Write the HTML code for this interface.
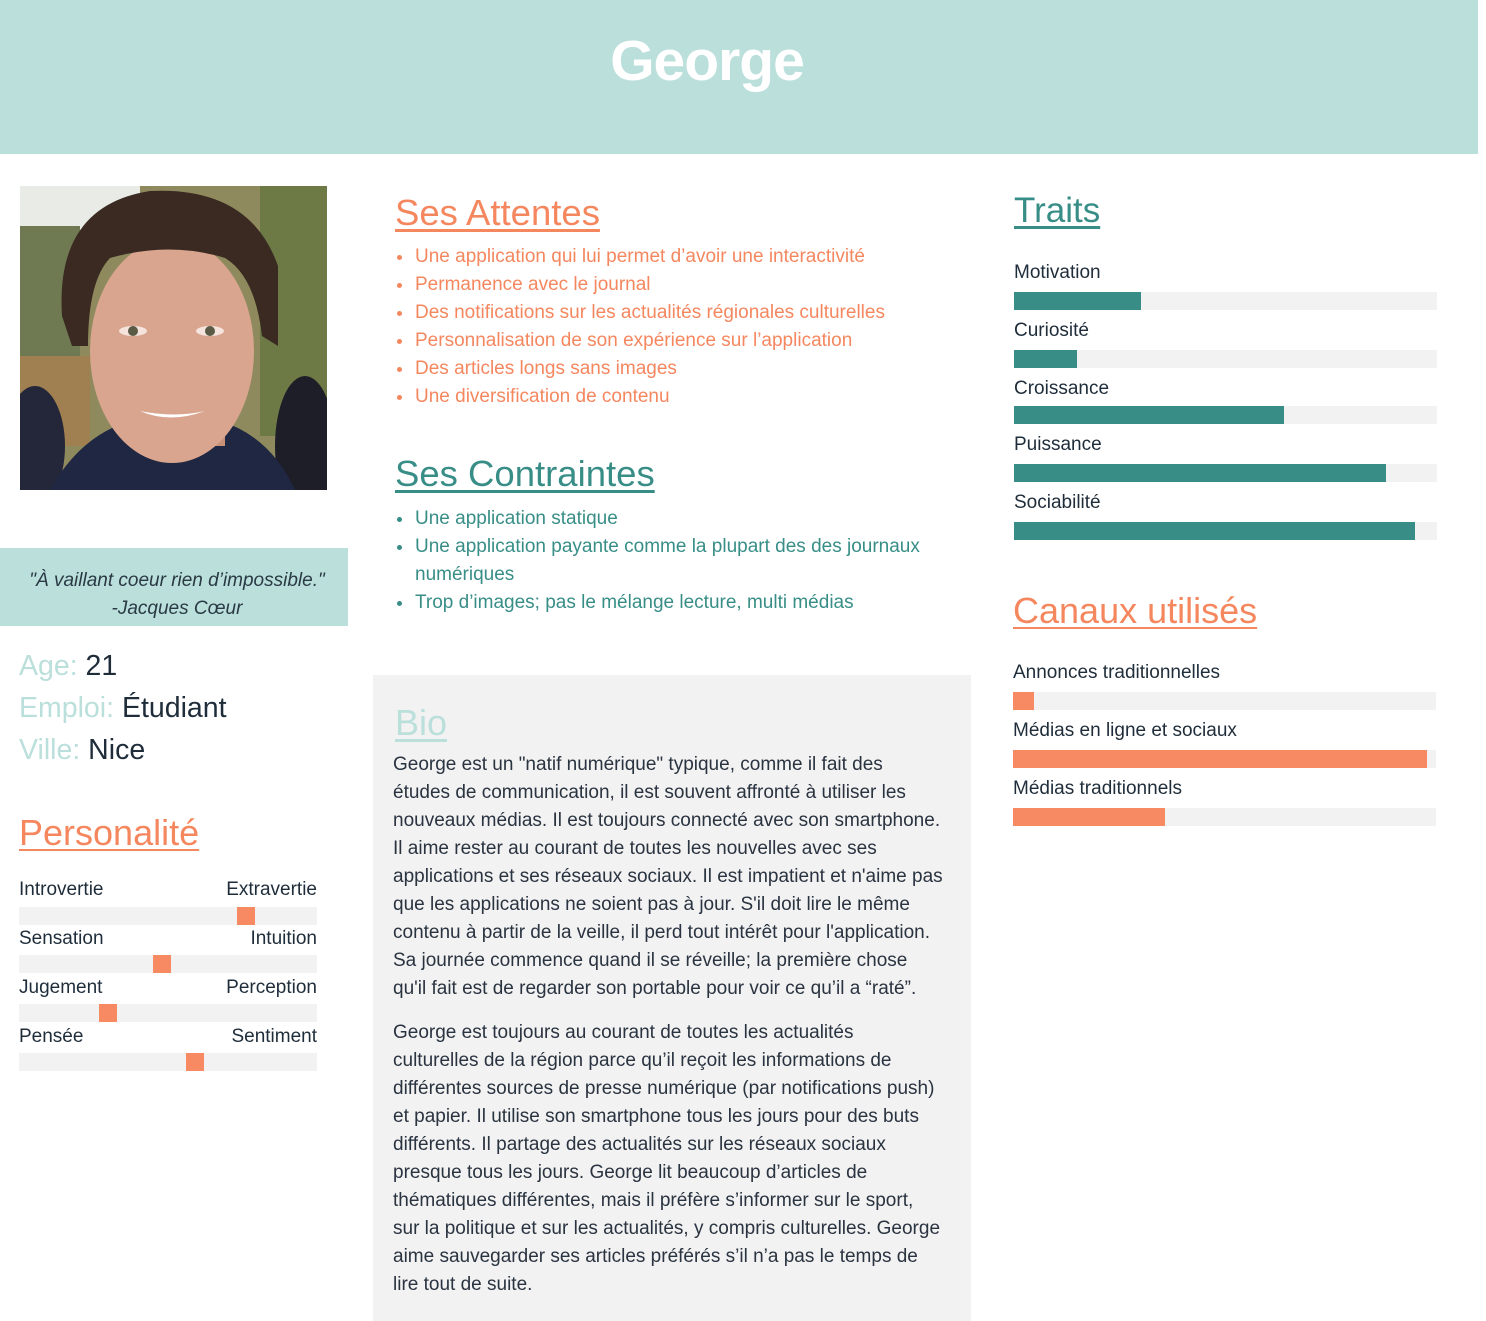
<!DOCTYPE html>
<html><head><meta charset="utf-8"><style>
*{margin:0;padding:0;box-sizing:border-box}
body{width:1486px;height:1321px;background:#fff;position:relative;overflow:hidden;font-family:"Liberation Sans",sans-serif;color:#1f2d3a}
.a{position:absolute;white-space:nowrap}
.hdr{position:absolute;left:0;top:0;width:1478px;height:154px;background:#bbdfdb}
.hdr h1{position:absolute;left:0;width:1414px;text-align:center;top:28px;font-size:57px;font-weight:bold;color:#fff;letter-spacing:-1px}
h2{position:absolute;font-weight:normal;text-decoration:underline;text-decoration-thickness:3px;text-underline-offset:4px;white-space:nowrap}
.or{color:#f5875f}.tl{color:#388e87}
ul{position:absolute;list-style:none;font-size:19px;line-height:28px}
ul li{position:relative;padding-left:20px;white-space:nowrap}
ul li:before{content:"";position:absolute;left:2px;top:12px;width:5px;height:5px;border-radius:50%;background:currentColor}
.bar{position:absolute;height:18px;background:#f2f2f2}
.bar i{position:absolute;left:0;top:0;height:18px}
.lbl{position:absolute;font-size:19px;white-space:nowrap;color:#1f2d3a}
.mk{position:absolute;width:18px;height:18px;background:#f78a62}
.bio{position:absolute;left:373px;top:675px;width:598px;height:646px;background:#f2f2f2}
.bio p{position:absolute;left:20px;font-size:19px;line-height:28px;white-space:nowrap;color:#2a3340}
</style></head><body>
<div class="hdr"><h1>George</h1></div>

<svg class="a" style="left:20px;top:186px" width="307" height="304" viewBox="0 0 307 304">
<rect width="307" height="304" fill="#8f8a5e"/>
<rect width="120" height="60" fill="#e9ece6"/>
<rect x="0" y="40" width="60" height="140" fill="#6f7a52"/>
<rect x="240" y="0" width="67" height="250" fill="#6d7a45"/>
<rect x="0" y="170" width="70" height="90" fill="#a08050"/>
<ellipse cx="285" cy="260" rx="30" ry="70" fill="#1e1e28"/>
<ellipse cx="15" cy="260" rx="30" ry="60" fill="#24263a"/>
<path d="M30 304 Q60 250 110 235 L200 235 Q250 250 275 304Z" fill="#1f2742"/>
<rect x="110" y="200" width="95" height="60" fill="#c99078"/>
<ellipse cx="152" cy="165" rx="82" ry="112" fill="#d9a58e"/>
<path d="M42 130 Q35 20 130 5 Q230 0 258 80 L258 160 L242 150 Q235 90 205 72 Q150 55 90 72 Q68 95 68 160 L52 160Z" fill="#3a2a22"/>
<ellipse cx="113" cy="145" rx="14" ry="5" fill="#fff" opacity=".7"/>
<ellipse cx="190" cy="145" rx="14" ry="5" fill="#fff" opacity=".7"/>
<circle cx="113" cy="145" r="5" fill="#5a5a45"/><circle cx="190" cy="145" r="5" fill="#5a5a45"/>
<path d="M120 225 Q150 238 185 225 Q155 232 120 225Z" fill="#fff"/>
</svg>

<div class="a" style="left:0;top:548px;width:348px;height:78px;background:#bbdfdb"></div>
<div class="a" style="left:0;top:567px;width:354px;text-align:center;font-size:19px;line-height:28px;font-style:italic;color:#2a3a45">"À vaillant coeur rien d’impossible."<br>-Jacques Cœur</div>

<div class="a" style="left:19px;top:645px;font-size:28.5px;line-height:42px;color:#1f2d3a"><span style="color:#bbdfdb">Age:</span> 21<br><span style="color:#bbdfdb">Emploi:</span> Étudiant<br><span style="color:#bbdfdb">Ville:</span> Nice</div>

<h2 class="or" style="left:19px;top:812px;font-size:36px;text-decoration-thickness:2px">Personalité</h2>
<div class="lbl" style="left:19px;top:879px">Introvertie</div><div class="lbl" style="right:1169px;top:879px">Extravertie</div>
<div class="bar" style="left:19px;top:907px;width:298px"></div><div class="mk" style="left:237px;top:907px"></div>
<div class="lbl" style="left:19px;top:928px">Sensation</div><div class="lbl" style="right:1169px;top:928px">Intuition</div>
<div class="bar" style="left:19px;top:955px;width:298px"></div><div class="mk" style="left:153px;top:955px"></div>
<div class="lbl" style="left:19px;top:977px">Jugement</div><div class="lbl" style="right:1169px;top:977px">Perception</div>
<div class="bar" style="left:19px;top:1004px;width:298px"></div><div class="mk" style="left:99px;top:1004px"></div>
<div class="lbl" style="left:19px;top:1026px">Pensée</div><div class="lbl" style="right:1169px;top:1026px">Sentiment</div>
<div class="bar" style="left:19px;top:1053px;width:298px"></div><div class="mk" style="left:186px;top:1053px"></div>

<h2 class="or" style="left:395px;top:192px;font-size:36.5px">Ses Attentes</h2>
<ul class="or" style="left:395px;top:243px">
<li>Une application qui lui permet d’avoir une interactivité</li>
<li>Permanence avec le journal</li>
<li>Des notifications sur les actualités régionales culturelles</li>
<li>Personnalisation de son expérience sur l’application</li>
<li>Des articles longs sans images</li>
<li>Une diversification de contenu</li>
</ul>

<h2 class="tl" style="left:395px;top:453px;font-size:36.5px">Ses Contraintes</h2>
<ul class="tl" style="left:395px;top:505px">
<li>Une application statique</li>
<li>Une application payante comme la plupart des des journaux<br>numériques</li>
<li>Trop d’images; pas le mélange lecture, multi médias</li>
</ul>

<div class="bio">
<h2 style="left:22px;top:27px;font-size:36px;color:#bbdfdb;text-decoration-thickness:3px">Bio</h2>
<p style="top:76px">George est un "natif numérique" typique, comme il fait des<br>études de communication, il est souvent affronté à utiliser les<br>nouveaux médias. Il est toujours connecté avec son smartphone.<br>Il aime rester au courant de toutes les nouvelles avec ses<br>applications et ses réseaux sociaux. Il est impatient et n'aime pas<br>que les applications ne soient pas à jour. S'il doit lire le même<br>contenu à partir de la veille, il perd tout intérêt pour l'application.<br>Sa journée commence quand il se réveille; la première chose<br>qu'il fait est de regarder son portable pour voir ce qu’il a “raté”.</p>
<p style="top:344px">George est toujours au courant de toutes les actualités<br>culturelles de la région parce qu’il reçoit les informations de<br>différentes sources de presse numérique (par notifications push)<br>et papier. Il utilise son smartphone tous les jours pour des buts<br>différents. Il partage des actualités sur les réseaux sociaux<br>presque tous les jours. George lit beaucoup d’articles de<br>thématiques différentes, mais il préfère s’informer sur le sport,<br>sur la politique et sur les actualités, y compris culturelles. George<br>aime sauvegarder ses articles préférés s’il n’a pas le temps de<br>lire tout de suite.</p>
</div>

<h2 class="tl" style="left:1014px;top:191px;font-size:35px">Traits</h2>
<div class="lbl" style="left:1014px;top:262px">Motivation</div>
<div class="bar" style="left:1014px;top:292px;width:423px"><i style="width:127px;background:#388e87"></i></div>
<div class="lbl" style="left:1014px;top:320px">Curiosité</div>
<div class="bar" style="left:1014px;top:350px;width:423px"><i style="width:63px;background:#388e87"></i></div>
<div class="lbl" style="left:1014px;top:378px">Croissance</div>
<div class="bar" style="left:1014px;top:406px;width:423px"><i style="width:270px;background:#388e87"></i></div>
<div class="lbl" style="left:1014px;top:434px">Puissance</div>
<div class="bar" style="left:1014px;top:464px;width:423px"><i style="width:372px;background:#388e87"></i></div>
<div class="lbl" style="left:1014px;top:492px">Sociabilité</div>
<div class="bar" style="left:1014px;top:522px;width:423px"><i style="width:401px;background:#388e87"></i></div>

<h2 class="or" style="left:1013px;top:590px;font-size:36px;text-decoration-thickness:2px">Canaux utilisés</h2>
<div class="lbl" style="left:1013px;top:662px">Annonces traditionnelles</div>
<div class="bar" style="left:1013px;top:692px;width:423px"><i style="width:21px;background:#f78a62"></i></div>
<div class="lbl" style="left:1013px;top:720px">Médias en ligne et sociaux</div>
<div class="bar" style="left:1013px;top:750px;width:423px"><i style="width:414px;background:#f78a62"></i></div>
<div class="lbl" style="left:1013px;top:778px">Médias traditionnels</div>
<div class="bar" style="left:1013px;top:808px;width:423px"><i style="width:152px;background:#f78a62"></i></div>
</body></html>
